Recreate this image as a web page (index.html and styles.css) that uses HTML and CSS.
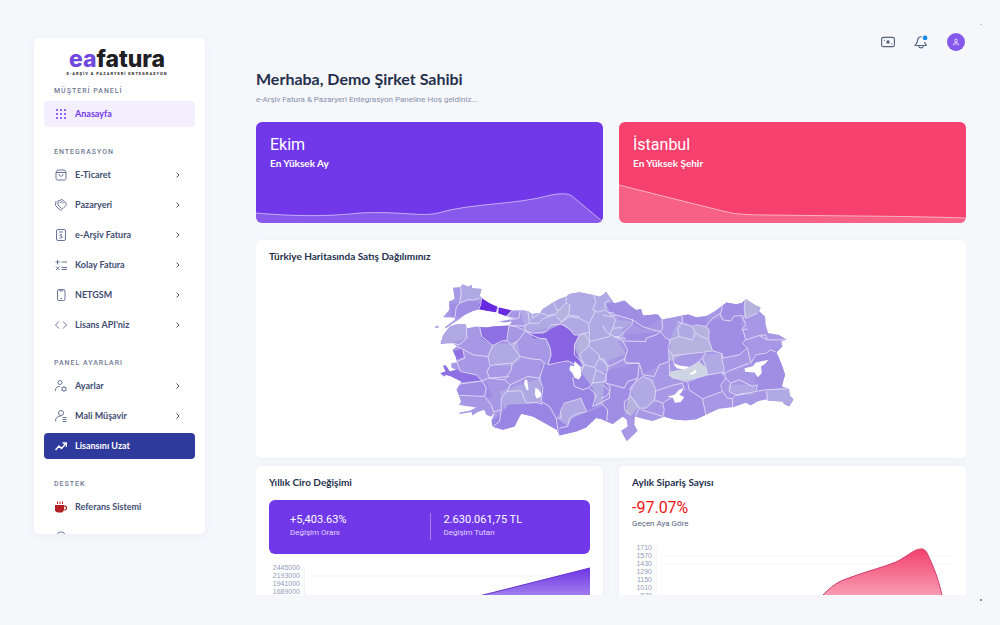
FILE: index.html
```html
<!DOCTYPE html>
<html lang="tr">
<head>
<meta charset="utf-8">
<meta name="viewport" content="width=device-width, initial-scale=1">
<title>eafatura</title>
<link rel="stylesheet" href="styles.css">
</head>
<body>
<div class="app">
  <aside class="sidebar">
    <a class="logo" href="#"><span class="logo-name"><span class="logo-accent">ea</span>fatura</span><span class="logo-tag">E-ARŞİV &amp; PAZARYERİ ENTEGRASYON</span></a>
    <nav class="nav">
      <h2 class="nav-label">MÜŞTERİ PANELİ</h2>
      <a class="nav-item is-active" href="#"><svg class="icon" viewBox="0 0 24 24"><g fill="#7239ea" stroke="none"><circle cx="4" cy="4" r="2"/><circle cx="12" cy="4" r="2"/><circle cx="20" cy="4" r="2"/><circle cx="4" cy="12" r="2"/><circle cx="12" cy="12" r="2"/><circle cx="20" cy="12" r="2"/><circle cx="4" cy="20" r="2"/><circle cx="12" cy="20" r="2"/><circle cx="20" cy="20" r="2"/></g></svg><span>Anasayfa</span></a>
      <h2 class="nav-label">ENTEGRASYON</h2>
      <a class="nav-item" href="#"><svg class="icon" viewBox="0 0 24 24"><path d="M5 2h14l3 4v13a3 3 0 0 1-3 3H5a3 3 0 0 1-3-3V6zM2 7h20M8 10c0 6 8 6 8 0"/></svg><span>E-Ticaret</span><svg class="chevron" viewBox="0 0 8 8"><path d="M2.500 1.500 5 4 2.500 6.500"/></svg></a>
      <a class="nav-item" href="#"><svg class="icon" viewBox="0 0 24 24"><path d="M6 4l8-3 8 7c1 2 1 3 0 5l-6 6c-1 1-2 1-3 0l-7-7zM2 4L1 13l9 9c1 1 3 1 4 0M9 8l5-3 4 4"/></svg><span>Pazaryeri</span><svg class="chevron" viewBox="0 0 8 8"><path d="M2.500 1.500 5 4 2.500 6.500"/></svg></a>
      <a class="nav-item" href="#"><svg class="icon" viewBox="0 0 24 24"><rect x="3" y="1" width="18" height="22" rx="3"/><path d="M8 6h8M14 11h-3c-2 0-2 3 0 3h1c3 0 3 4 0 4H9"/></svg><span>e-Arşiv Fatura</span><svg class="chevron" viewBox="0 0 8 8"><path d="M2.500 1.500 5 4 2.500 6.500"/></svg></a>
      <a class="nav-item" href="#"><svg class="icon" viewBox="0 0 24 24"><path d="M1 6h9M5 2v9M13 6h11M2 15l7 7M9 15l-7 7M13 17h11M13 21h11"/></svg><span>Kolay Fatura</span><svg class="chevron" viewBox="0 0 8 8"><path d="M2.500 1.500 5 4 2.500 6.500"/></svg></a>
      <a class="nav-item" href="#"><svg class="icon" viewBox="0 0 24 24"><rect x="5" y="1" width="15" height="22" rx="3"/><path d="M11 19h3M9 2l1 2h5l1-2"/></svg><span>NETGSM</span><svg class="chevron" viewBox="0 0 8 8"><path d="M2.500 1.500 5 4 2.500 6.500"/></svg></a>
      <a class="nav-item" href="#"><svg class="icon" viewBox="0 0 24 24"><path d="M8 5l-7 7 7 7M16 5l7 7-7 7"/></svg><span>Lisans API'niz</span><svg class="chevron" viewBox="0 0 8 8"><path d="M2.500 1.500 5 4 2.500 6.500"/></svg></a>
      <h2 class="nav-label">PANEL AYARLARI</h2>
      <a class="nav-item" href="#"><svg class="icon" viewBox="0 0 24 24"><circle cx="10" cy="5" r="4"/><path d="M1 22c0-7 3-9 9-9M18 12v2M18 21v2M13 15l2 1M21 20l2 1M13 21l2-1M21 16l2-1"/><circle cx="18" cy="18" r="4"/></svg><span>Ayarlar</span><svg class="chevron" viewBox="0 0 8 8"><path d="M2.500 1.500 5 4 2.500 6.500"/></svg></a>
      <a class="nav-item" href="#"><svg class="icon" viewBox="0 0 24 24"><circle cx="12" cy="6" r="5"/><path d="M1 23c0-8 5-11 11-11M15 15h8M15 19h8M15 23h8"/></svg><span>Mali Müşavir</span><svg class="chevron" viewBox="0 0 8 8"><path d="M2.500 1.500 5 4 2.500 6.500"/></svg></a>
      <a class="nav-item is-primary" href="#"><svg class="icon" viewBox="0 0 24 24"><path stroke-width="3" d="M1 20l7-8 5 5L23 6M15 6h8v8"/></svg><span>Lisansını Uzat</span></a>
      <h2 class="nav-label">DESTEK</h2>
      <a class="nav-item" href="#"><svg class="icon" viewBox="0 0 24 24"><path fill="#b21f24" stroke="none" d="M0 8h18v1h2c6 0 5 10 0 10h-3c-1 3-2 4-5 4H6c-3 0-6-2-6-5zM18 11v6h1c4 0 3-6 0-6z"/><path stroke="#b21f24" d="M5 1v5M10 1v5M15 1v5"/></svg><span>Referans Sistemi</span></a>
      <a class="nav-item" href="#" aria-label="Destek"><svg class="icon" viewBox="0 0 24 24"><circle cx="12" cy="12" r="10"/><path d="M12 11v6M12 7v1"/></svg></a>
    </nav>
  </aside>

  <main class="main">
    <header class="topbar">
      <button class="tool" type="button" aria-label="Bakiye"><svg viewBox="0 0 24 24"><rect x="1" y="4" width="22" height="16" rx="3"/><circle cx="12" cy="12" r="2" fill="#56657f"/><path d="M5 9h2M17 15h2"/></svg></button>
      <button class="tool" type="button" aria-label="Bildirimler"><svg viewBox="0 0 24 24"><path d="M13 3C8 3 6 6 6 10c0 4-2 5-4 7v1h19v-1c-2-2-3-3-3-5M8 19c1 4 7 4 8 0"/><circle cx="19" cy="5" r="4" fill="#1688e8" stroke="none"/></svg></button>
      <button class="avatar" type="button" aria-label="Profil"><svg viewBox="0 0 24 24"><circle cx="12" cy="7" r="4"/><path d="M4 22c0-12 16-12 16 0M8 21l4-5 4 5"/></svg></button>
    </header>
    <h1 class="title">Merhaba, Demo Şirket Sahibi</h1>
    <p class="subtitle">e-Arşiv Fatura &amp; Pazaryeri Entegrasyon Paneline Hoş geldiniz...</p>

    <section class="row">
      <article class="stat stat-purple">
        <p class="stat-value">Ekim</p>
        <h2 class="stat-name">En Yüksek Ay</h2>
        <svg class="spark" viewBox="0 0 347 36" preserveAspectRatio="none"><path class="spark-fill" d="M0 26C35 29 68 30 104 26C145 24 165 30 182 26C215 16 260 18 295 8Q311 5 316 9L347 35V36H0z"/><path class="spark-line" d="M0 26C35 29 68 30 104 26C145 24 165 30 182 26C215 16 260 18 295 8Q311 5 316 9L347 35"/></svg>
      </article>
      <article class="stat stat-pink">
        <p class="stat-value">İstanbul</p>
        <h2 class="stat-name">En Yüksek Şehir</h2>
        <svg class="spark spark-tall" viewBox="0 0 347 40" preserveAspectRatio="none"><path class="spark-fill" d="M0 2C40 12 75 21 108 29Q118 32 150 32C220 33 290 33 347 35V40H0z"/><path class="spark-line" d="M0 2C40 12 75 21 108 29Q118 32 150 32C220 33 290 33 347 35"/></svg>
      </article>
    </section>

    <section class="card map-card">
      <h2 class="card-title">Türkiye Haritasında Satış Dağılımınız</h2>
      <svg class="map" viewBox="0 0 1110 505" role="img" aria-label="Türkiye haritası">
        <defs>
          <clipPath id="land">
            <path d="M60 38L82 36 90 28 105 35 116 30 118 40 146 42 140 62 150 72 170 85 196 97 190 112 165 108 138 103 120 108 95 120 80 132 60 145 38 161 36 156 65 135 66 128 30 127 40 115 50 104 48 80 65 72z"/>
            <path d="M198 98L238 107 262 106 285 108 297 117 322 114 330 102 362 82 380 72 400 65 410 57 440 52 482 60 500 65 513 58 520 50 528 62 545 85 575 76 592 92 610 105 625 102 631 122 675 118 688 134 748 122 768 119 790 127 820 124 845 110 870 92 882 83 910 88 928 84 940 72 950 79 968 90 985 98 980 108 998 125 1000 150 1007 174 1040 180 1063 194 1047 200 1050 215 1040 225 1032 232 1040 250 1050 275 1058 300 1048 335 1070 342 1072 362 1084 374 1070 395 1055 388 1050 380 1010 378 1000 374 975 380 955 392 940 384 905 397 860 402 820 420 790 434 760 437 725 434 695 426 660 439 630 432 607 425 605 450 615 468 595 488 582 500 570 478 565 468 585 455 582 435 570 425 540 448 522 440 505 433 490 430 460 458 430 470 380 482 372 465 345 450 300 425 265 417 255 435 245 455 210 465 180 456 175 438 186 413 174 426 160 420 154 405 135 412 118 422 116 412 80 418 79 413 110 408 130 398 94 393 78 390 84 382 78 362 70 345 80 330 85 320 55 305 38 300 35 305 22 295 38 290 30 272 38 270 50 290 70 285 55 278 55 265 72 262 68 245 62 232 58 225 72 215 60 205 40 205 22 208 30 182 50 155 70 148 98 148 103 160 130 155 160 158 185 154 228 152 238 140 215 143 198 140 240 132 215 122 196 115z"/>
            <path d="M5 156l10-4 3 6-12 1z"/>
          </clipPath>
        </defs>
        <g clip-path="url(#land)">
          <rect width="1110" height="525" fill="#a798e5"/>
          <path fill="#b0a9e3" d="M82 20H150V70L110 76 80 90zM30 165L100 140V190L22 215zM262 106L400 50 530 45 545 110 580 190 520 210 500 270 440 180 380 150 280 175zM175 210L255 205 262 255 235 275 180 270 165 245zM200 350L325 310 330 380 290 387 215 405zM383 410L400 383 450 370 462 405 410 440 405 455 375 440zM420 200L475 170 500 220 530 270 535 380 490 395 470 350 430 340 445 270zM735 140L780 155 820 155 828 195 840 228 720 242 708 225 712 195zM590 330L630 305 665 315 670 380 640 400 615 400zM810 240L870 235 875 300 820 300zM885 330L975 330 960 362 890 350zM1000 345L1080 335V390L1005 380zM510 130L600 140 545 185 580 235 510 265z"/>
          <path fill="#b6b4df" d="M370 105L408 85 410 125 385 145zM430 185L460 175 470 215 440 235zM920 60L985 90 975 115 930 130zM712 195L740 185 780 195 828 195 840 228 760 235 710 260zM780 155L820 155 830 165 825 195 780 190zM580 375L595 360 620 395 595 422 575 415z"/>
          <path fill="#cdd5e3" d="M712 290L760 282 800 260 823 280 825 302 760 318 722 312 708 302z"/>
          <path fill="#a08ee5" d="M40 90L135 75 140 110 60 130zM520 85L620 80 690 130 630 165 590 135 530 110zM825 140L920 120 940 190 950 230 885 250 840 225zM960 240L1045 220 1065 335 970 350zM750 325L875 290 870 350 810 375 765 345zM515 290L615 265 630 300 590 350 575 425 540 455 510 430zM690 380L760 345 810 375 820 430 700 440zM575 180L690 170 715 210 705 260 625 300 580 250zM748 110H825L820 155 790 150 750 140zM870 75H935V120L895 140 862 115z"/>
          <path fill="#9986e4" d="M178 440L215 405 225 390 330 385 378 430 378 490 165 480zM378 435L405 455 420 430 460 415 520 390 525 440 380 490zM325 270L420 258 480 340 490 395 460 410 445 370 398 385 370 430 325 380z"/>
          <path fill="#9e8ce5" d="M75 330L160 320 180 370 78 365z"/>
          <path fill="#8e70e3" d="M140 155L228 150 225 195 180 212 145 190zM58 230L90 220 95 245 68 255zM20 270L72 285 130 300 145 318 80 322 15 305z"/>
          <path fill="#8964e2" d="M295 175L330 178 350 165 385 148 410 165 425 182 440 180 425 210 428 228 448 275 435 265 405 258 390 265 348 270 355 240 350 210 335 190 300 190z"/>
          <path fill="#672ae0" d="M146 68L198 94 238 105 216 125 194 114 136 104z"/>
          <g class="borders">
            <path d="M82 36L85 55 80 85 70 95 66 128M80 85L106 73 122 76 140 70M146 68L143 90 136 105M195 95L190 113M238 106L222 125 245 130M262 106L258 130 230 135M285 108L290 145 275 153 232 152M297 117L300 130 322 114 345 122 368 118 375 110 362 82M400 65L400 83 412 90 407 120 385 142 368 118 330 132 318 145 290 145M400 83L375 110M385 148L355 150 340 170 300 175 278 168 275 153M385 142L410 125 440 130 468 145 470 172 440 180 425 180 410 162 400 155 385 148M407 120L440 125M482 60L490 80 480 105 495 112 515 105 527 112 545 115M490 105L470 145M520 103L515 85 530 75M527 112L548 135 540 160 570 158M540 160L530 185 470 200 470 172M540 185L580 192"/>
            <path d="M100 150L102 190 78 210 60 205M140 155L146 185 180 212 208 198 222 197 228 152M228 152L250 155 278 168 255 198 235 210 222 197M255 198L240 215 262 245 238 265 235 285 215 315 232 330 222 350M180 212L165 245 172 272 230 265 238 265M172 272L162 290 170 310 228 305M165 245L120 240 94 225 72 215M72 260L95 250 90 225M72 262L82 290 130 300 148 318 78 328M148 318L160 340 155 365 80 362M155 365L175 390 182 412 205 405 205 370 222 350 265 348 280 385 310 383 330 388M205 405L200 440 180 456M148 318L165 310 215 315M262 245L295 252 325 255 335 265 320 310 285 305 232 330M320 310L330 340 325 380 350 395 370 430 378 482M278 168L295 180 320 190 340 192 352 220 355 240 345 270M345 270L405 258 445 280 455 270 425 240 425 210 440 180 455 175 470 200 468 215 440 240 455 270 485 278 500 250 500 240 470 215M455 270L445 290 420 310 425 335 450 345 470 338 480 322 490 285 485 278M490 285L520 300 520 320 480 325M500 250L515 255 525 280 515 320 532 335 530 370 500 385 480 395 490 360 470 340M383 410L395 385 430 375 445 370 450 385 462 410 430 418 410 430 405 455 380 460M383 410L385 430 370 430M505 385L525 405 522 440M500 250L530 275 580 250"/>
            <path d="M510 120L530 125 550 120 590 132 605 138 630 155 660 165 685 170M600 132L598 148 560 185 545 185 520 170 510 150M545 185L570 198 640 200 640 190 670 180 685 170 700 190 712 195M570 198L585 225 575 255 580 265 620 265 630 300 665 305 680 270 710 260 708 225 712 195M688 134L690 160 685 170M748 122L750 140 735 160 740 185 712 195M735 140L780 155 790 150 820 155 840 130 865 115 870 92M780 155L788 175 780 195 740 185M788 175L828 195 830 165 820 155M828 195L840 228 810 232 720 242 708 225M862 115L870 135 895 138 905 123 928 122 940 150 930 160 940 195 930 205 945 220 920 240 870 250 865 235 840 228M940 72L935 95 940 130 975 115M928 165L945 162M940 195L980 182 1000 180 1005 195 1060 195M980 182L1005 195M945 220L955 265 970 240 1000 235 1015 225 1032 232M870 235L868 255 875 280 870 300 885 290 950 265M720 242L725 270 775 280 810 250 820 232M810 250L820 275 825 300 875 292M820 300L765 320 750 318 712 300 710 265M765 320L770 345 810 372 870 350 865 330 880 310 875 292M880 310L895 325 920 315 960 335 975 330 970 350 1000 345 1070 342M895 325L890 350 915 362 970 350M870 350L885 370 900 372 910 360 940 355M900 372L900 397M1003 350L1005 378M810 372L820 420M580 265L620 265 615 310 585 320 575 340 520 325M615 310L595 345 590 370 575 380 575 405 595 422M590 345L600 330 630 305 655 315 670 345 665 375 690 385 745 350M665 350L725 330 750 325M665 375L640 400 620 400 595 365M620 400L610 422M690 385L695 405 690 425 625 405M750 325L755 345M510 330L532 350 520 365 505 370"/>
          </g>
        </g>
        <path fill="#fff" d="M412 272l12 2 2-15 10 10 7 8 3 25-8 12-12-5-8-15-8-8zM276 315h7l4 30-5 2-8-20zM308 338l8 5 10 14-3 10-12 4-5-14zM726 265l14 8 30 3-12 8-24-3-8-8zM770 296l12-5 8-8 2 10-14 7zM704 365l22-5 14-15 12-5-4 12-8 8 15 7-10 15-18 2-6-15zM936 280l24-5 10-12 38-8-10 12-12 8 2 20-12 12-10-14-28-2zM100 118l20-9-4 22-20 5z"/>
      </svg>
    </section>

    <section class="row row-last">
      <article class="card">
        <h2 class="card-title">Yıllık Ciro Değişimi</h2>
        <dl class="change">
          <div class="change-cell"><dd>+5,403.63%</dd><dt>Değişim Oranı</dt></div>
          <div class="change-cell change-split"><dd>2.630.061,75 TL</dd><dt>Değişim Tutarı</dt></div>
        </dl>
        <div class="chart">
          <ol class="ticks"><li>2445000</li><li>2193000</li><li>1941000</li><li>1689000</li></ol>
          <svg class="plot" viewBox="0 0 285 40" preserveAspectRatio="none">
            <defs><linearGradient id="violet" x1="0" y1="0" x2="0" y2="1"><stop offset="0" stop-color="#6e35e4"/><stop offset="1" stop-color="#b094f2"/></linearGradient></defs>
            <path stroke="#f3f3f8" d="M.5 2v38M4 12h281"/><path fill="url(#violet)" d="M143 40L285 4v36z"/><path fill="none" stroke="#6330cf" d="M143 40L285 4"/>
          </svg>
        </div>
      </article>
      <article class="card">
        <h2 class="card-title">Aylık Sipariş Sayısı</h2>
        <p class="drop">-97.07%</p>
        <p class="drop-note">Geçen Aya Göre</p>
        <div class="chart chart-orders">
          <ol class="ticks"><li>1710</li><li>1570</li><li>1430</li><li>1290</li><li>1150</li><li>1010</li><li>870</li></ol>
          <svg class="plot" viewBox="0 0 297 56" preserveAspectRatio="none">
            <defs><linearGradient id="rose" x1="0" y1="0" x2="0" y2="1"><stop offset="0" stop-color="#f1416c"/><stop offset="1" stop-color="#fba5b9"/></linearGradient></defs>
            <path stroke="#f7f7fa" d="M.5 2v54M4 12h293M4 20h293"/><path fill="url(#rose)" stroke="#cf3d72" d="M162 56C172 46 178 39 190 35C205 29 225 24 240 18C252 12 258 5 265 5Q269 4 272 11C278 24 283 36 287 56"/>
          </svg>
        </div>
      </article>
    </section>
  </main>
</div>
</body>
</html>
```
FILE: styles.css
```css
* { box-sizing: border-box; }
body {
  margin: 0;
  background: #f5f7fb;
  color: #2c3654;
  font-family: Roboto, "Noto Sans", sans-serif;
  font-size: 8px;
  line-height: 12px;
}
h1, h2, p, dl, dd, ol { margin: 0; padding: 0; }
h1, h2, .nav-item { font-family: Lato, "Noto Sans", sans-serif; }
a { color: inherit; text-decoration: none; }
button { border: 0; padding: 0; background: none; cursor: pointer; }
svg { display: block; }

.app { position: relative; display: flex; height: 100vh; padding: 0 34px 30px; gap: 51px; overflow: hidden; }

/* Corner specks */
.app::before, .app::after { content: ""; position: absolute; right: 18px; width: 2px; height: 2px; border-radius: 50%; }
.app::before { top: 24px; height: 1px; background: #b5b9c4; }
.app::after { bottom: 24px; background: #6c7080; }

/* Sidebar */
.sidebar {
  flex: 0 0 171px;
  margin: 38px 0 61px;
  padding: 9px 10px 0;
  overflow: hidden;
  background: #fff;
  border-radius: 5px;
  box-shadow: 0 2px 8px rgba(60, 70, 130, .05);
}
.logo { display: flex; flex-direction: column; align-items: center; height: 38px; margin-left: -5px; color: #202024; }
.logo-name { font: 800 23px/25px Inter, sans-serif; }
.logo-accent { color: #6f48dc; }
.logo-tag { font: 700 4px/4px Roboto, sans-serif; letter-spacing: 1px; white-space: nowrap; }
.nav { display: flex; flex-direction: column; gap: 4px; }
.nav-label {
  margin: 15px 0 0 10px;
  font: 500 7px/12px Roboto, sans-serif;
  letter-spacing: 1px;
  color: #6f7994;
}
.nav-label:first-child { margin-top: 0; }
.nav-item {
  display: flex;
  align-items: center;
  gap: 8px;
  flex: 0 0 26px;
  padding: 0 13px 0 11px;
  border-radius: 4px;
  font-size: 9px;
  font-weight: 700;
  color: #424d72;
}
.icon { width: 12px; height: 12px; fill: none; stroke: #6a7499; stroke-width: 2; }
.chevron { width: 8px; height: 8px; margin-left: auto; fill: none; stroke: #4a526c; }
.is-active { background: #f4effe; color: #7239ea; }
.is-primary { background: #2e3a9c; color: #fff; }
.is-primary .icon { stroke: #fff; }

/* Main column */
.main { flex: 1; min-width: 0; display: flex; flex-direction: column; overflow: hidden; padding-top: 33px; }
.topbar { display: flex; justify-content: flex-end; align-items: center; gap: 19px; height: 18px; padding-right: 1px; flex-shrink: 0; }
.tool svg { width: 14px; height: 14px; fill: none; stroke: #56657f; stroke-width: 2; }
.avatar { display: grid; place-items: center; width: 18px; height: 18px; border-radius: 50%; background: #8558ec; }
.avatar svg { width: 8px; height: 8px; fill: none; stroke: #fff; stroke-width: 2; }
.title { margin-top: 18px; font-size: 16px; line-height: 20px; color: #26304d; }
.subtitle { margin-top: 5px; color: #8790a9; }

.row { display: grid; grid-template-columns: 1fr 1fr; gap: 16px; margin-top: 16px; flex-shrink: 0; }
.row-last { margin-top: 8px; }
.stat { display: flex; flex-direction: column; height: 101px; padding-top: 13px; border-radius: 6px; overflow: hidden; color: #fff; }
.stat-purple { background: #7138e9; }
.stat-pink { background: #f6416e; }
.stat-value { padding-left: 14px; font-size: 16px; line-height: 20px; }
.stat-name { padding: 2px 0 0 14px; font-size: 10px; line-height: 12px; }
.spark { width: 100%; height: 36px; margin-top: auto; }
.spark-tall { height: 40px; }
.spark-fill { fill: rgba(255, 255, 255, .17); }
.spark-line { fill: none; stroke: rgba(255, 255, 255, .55); }

.card { padding: 10px 13px 0; background: #fff; border-radius: 5px; box-shadow: 0 2px 8px rgba(60, 70, 130, .05); min-width: 0; }
.card-title { font-size: 10px; line-height: 12px; color: #26304d; }
.map-card { height: 218px; margin-top: 17px; flex-shrink: 0; }
.map { width: 54%; margin: 13px 0 0 24%; }
.borders path { fill: none; stroke: #ddd6f6; stroke-width: 3; stroke-linejoin: round; }

.change { display: grid; grid-template-columns: 1fr 1fr; margin-top: 12px; padding: 13px 0 14px; border-radius: 6px; background: #7138e9; color: #fff; }
.change-cell { display: flex; flex-direction: column; padding-left: 21px; }
.change-split { padding-left: 13px; border-left: 1px solid #a57ff2; }
.change dd { font-size: 11px; line-height: 13px; }
.change dt { line-height: 14px; color: #e0d4fb; }

.chart { display: grid; grid-template-columns: 31px 1fr; column-gap: 4px; margin-top: 10px; }
.chart-orders { grid-template-columns: 20px 1fr; margin-top: 14px; }
.ticks { list-style: none; font: 7px/8px "Liberation Sans", sans-serif; color: #929ab9; text-align: right; }
.plot { width: 100%; height: 40px; }
.chart-orders .plot { height: 56px; }
.drop { margin-top: 10px; font-size: 16px; line-height: 20px; color: #ec1414; }
.drop-note { color: #566080; }
```
